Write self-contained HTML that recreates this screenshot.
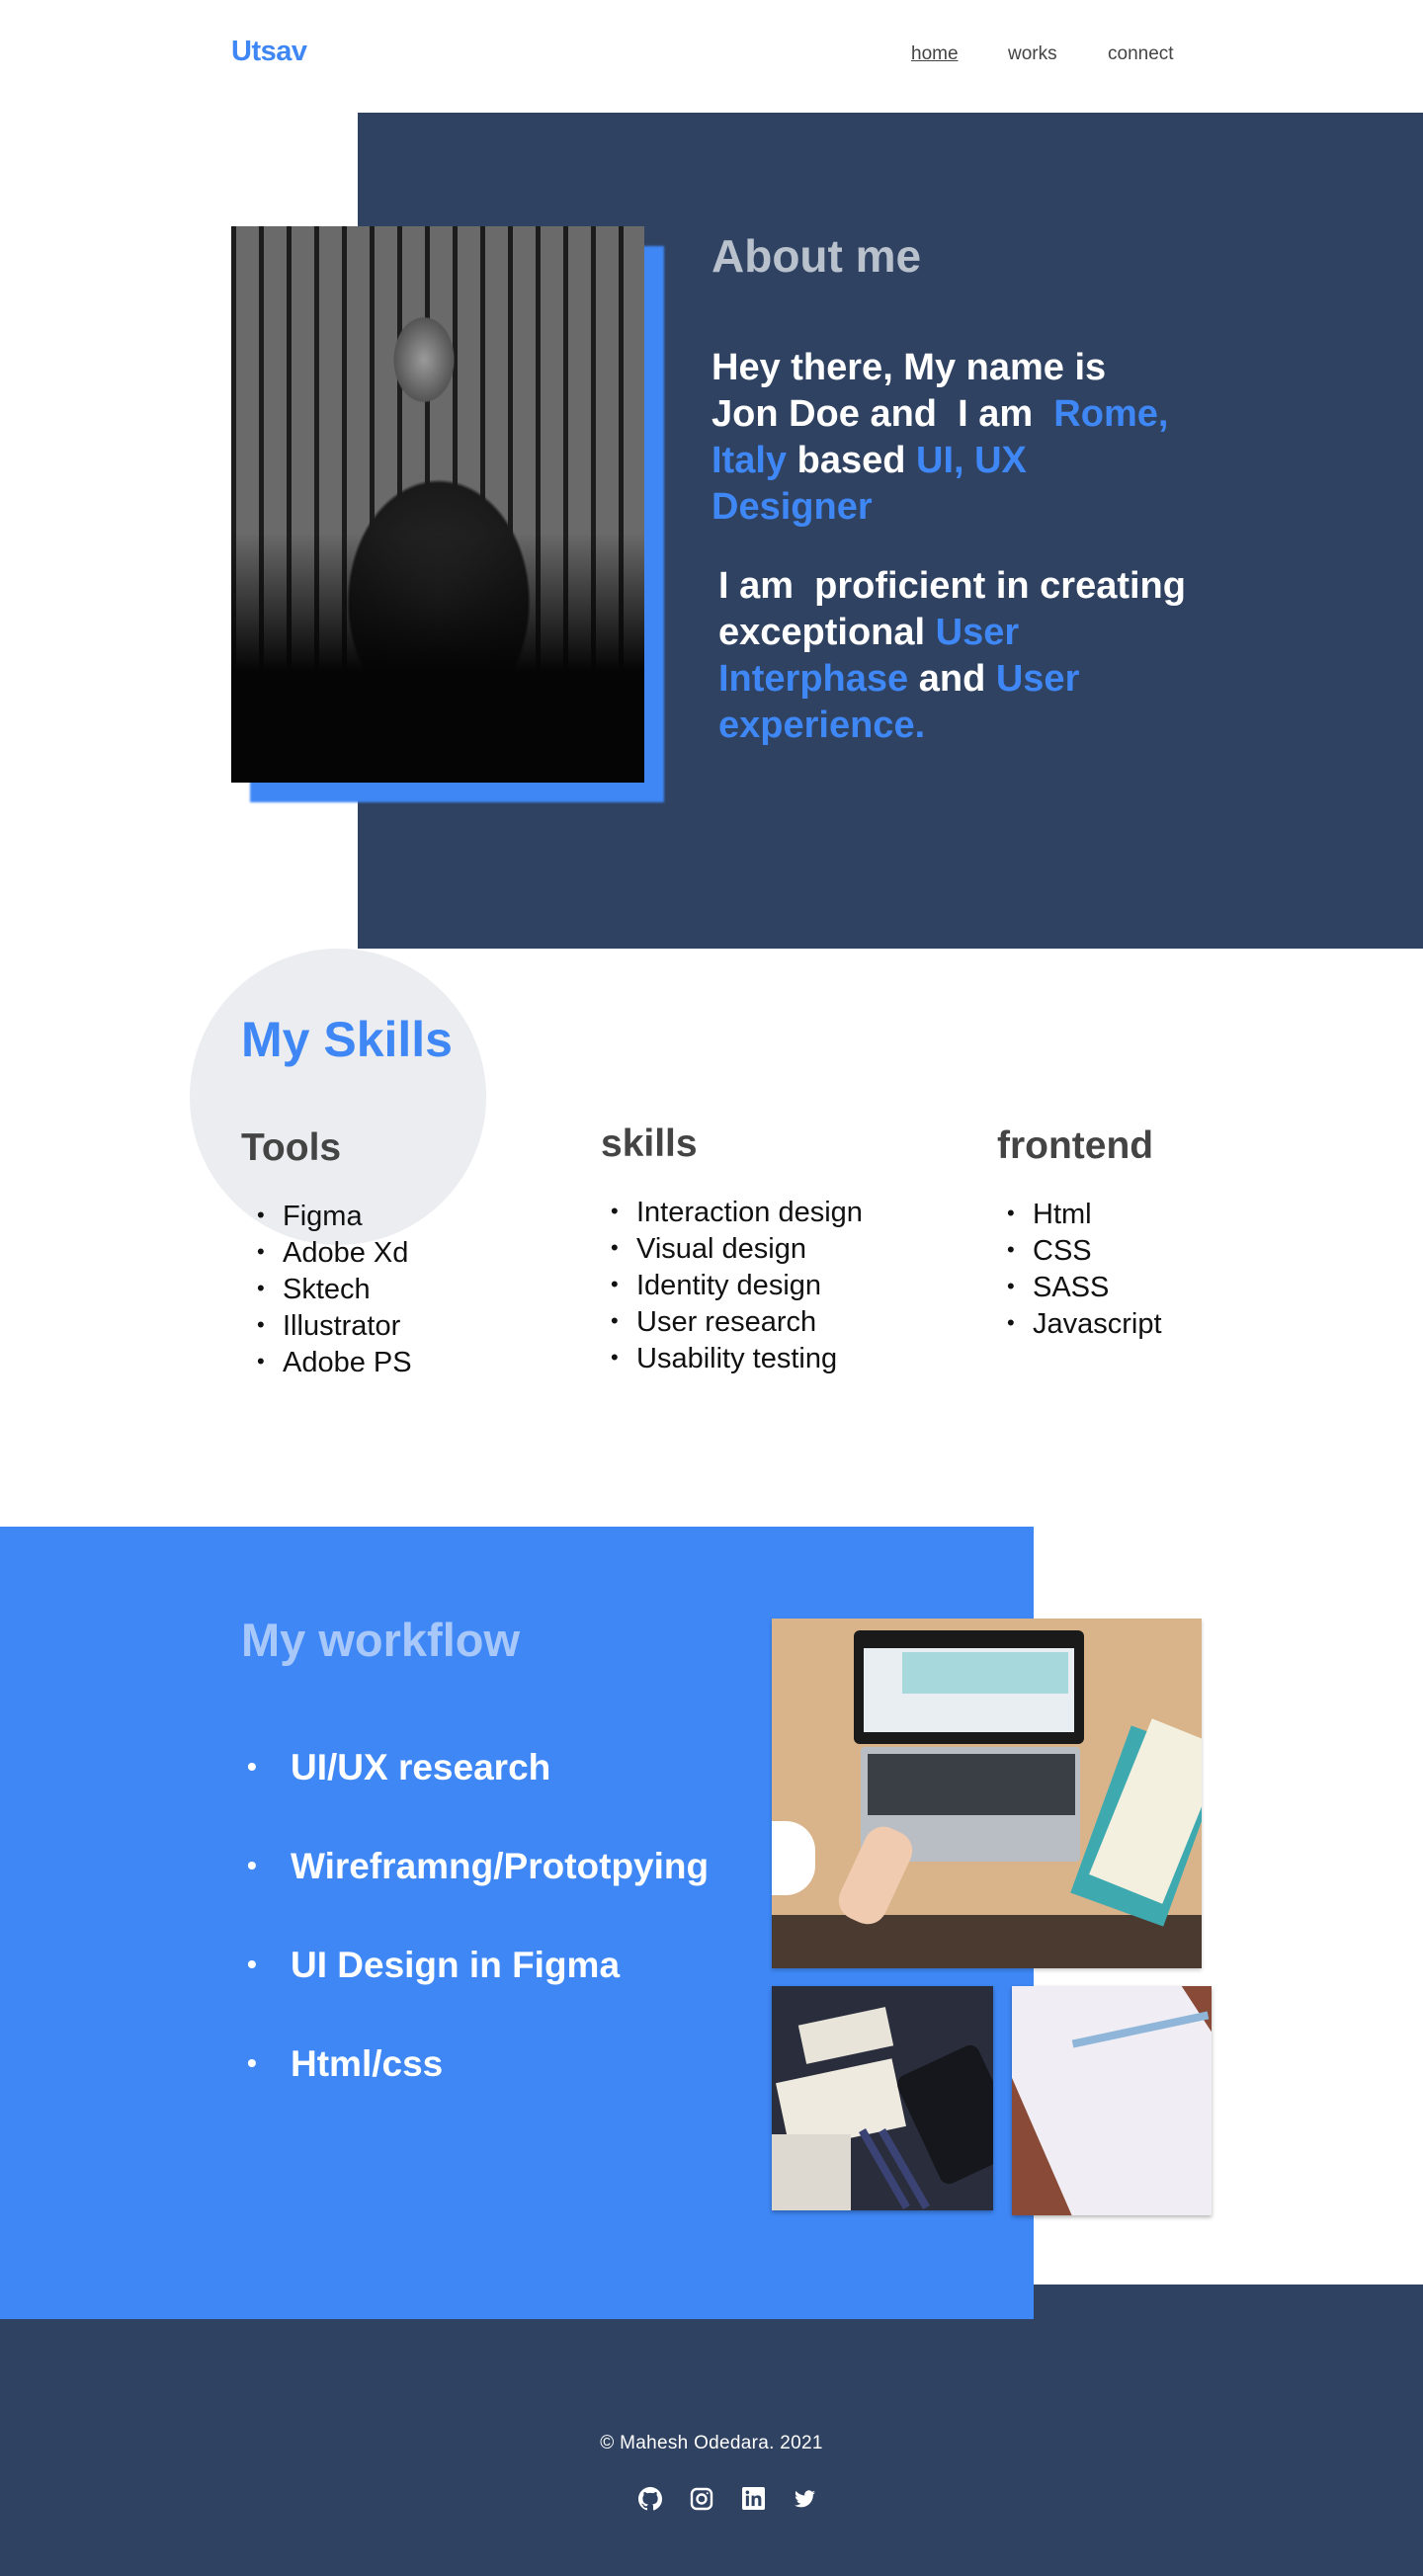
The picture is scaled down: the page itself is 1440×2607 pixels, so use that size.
<!DOCTYPE html>
<html><head><meta charset="utf-8">
<style>
*{margin:0;padding:0;box-sizing:border-box}
html,body{width:1440px;height:2607px;overflow:hidden;background:#fff;font-family:"Liberation Sans",sans-serif}
.abs{position:absolute}
.logo{left:234px;top:36px;font-size:29px;font-weight:bold;color:#3e87f5;letter-spacing:-0.5px}
.nav{top:44px;font-size:19px;color:#444}
.dark{left:362px;top:114px;width:1078px;height:846px;background:#2f4262}
.shadow{left:253px;top:249px;width:419px;height:563px;background:#3e87f5;filter:blur(1px)}
.photo{left:234px;top:229px;width:418px;height:563px;background:
 linear-gradient(180deg,rgba(0,0,0,0) 55%,#050505 80%),
 radial-gradient(ellipse 50px 70px at 195px 135px,#9a9a9a,#555 60%,transparent 62%),
 radial-gradient(ellipse 150px 200px at 210px 380px,#2a2a2a,#1a1a1a 60%,transparent 62%),
 repeating-linear-gradient(90deg,#1c1c1c 0 5px,#6a6a6a 5px 28px),#333;overflow:hidden}
.h-about{left:720px;top:232px;font-size:46px;font-weight:bold;color:#b9c1cd}
.p{color:#fff;font-weight:bold;font-size:38px;line-height:47px;white-space:nowrap}
.b{color:#3e87f5}
.circle{left:192px;top:960px;width:300px;height:300px;border-radius:50%;background:#ecedf1}
.myskills{left:244px;top:1023px;font-size:50px;font-weight:bold;color:#3e87f5}
.col h3{font-size:39px;color:#444;font-weight:bold;margin-bottom:28px}
.col ul{list-style:none;font-size:29px;line-height:35px;color:#111}
.col li:before{content:"•";font-size:22px;display:inline-block;width:26px;margin-left:16px;vertical-align:3px}
.blue{left:0;top:1545px;width:1046px;height:802px;background:#3e87f5}
.foot{left:0;top:2312px;width:1440px;height:295px;background:#2f4262}
.wf{left:244px;top:1632px;font-size:47px;font-weight:bold;color:#a9c8fa}
.wl{left:250px;top:1760px;list-style:none;color:#fff;font-weight:bold;font-size:37px}
.wl li{height:100px;line-height:56px}
.wl li:before{content:"•";font-size:28px;display:inline-block;width:44px;vertical-align:4px}
.img1{left:781px;top:1638px;width:435px;height:354px;background:#d9b48a;overflow:hidden;box-shadow:0 2px 4px rgba(0,0,0,.2)}
.img2{left:781px;top:2010px;width:224px;height:227px;background:#2a2e3c;overflow:hidden;box-shadow:0 2px 4px rgba(0,0,0,.3)}
.img3{left:1024px;top:2010px;width:202px;height:232px;background:#8a4a38;overflow:hidden;box-shadow:0 2px 4px rgba(0,0,0,.3)}
.ft{left:0;width:1440px;top:2462px;text-align:center;color:#fff;font-size:19px;letter-spacing:0.3px}
</style></head><body>
<div class="abs logo">Utsav</div>
<div class="abs nav" style="left:922px;text-decoration:underline">home</div>
<div class="abs nav" style="left:1020px">works</div>
<div class="abs nav" style="left:1121px">connect</div>

<div class="abs dark"></div>
<div class="abs shadow"></div>
<div class="abs photo"></div>
<div class="abs h-about">About me</div>
<div class="abs p" style="left:720px;top:349px">Hey there, My name is<br>Jon Doe and&nbsp; I am&nbsp; <span class="b">Rome,</span><br><span class="b">Italy</span> based <span class="b">UI, UX</span><br><span class="b">Designer</span></div>
<div class="abs p" style="left:727px;top:570px">I am&nbsp; proficient in creating<br>exceptional <span class="b">User</span><br><span class="b">Interphase</span> and <span class="b">User</span><br><span class="b">experience.</span></div>

<div class="abs circle"></div>
<div class="abs myskills">My Skills</div>
<div class="abs col" style="left:244px;top:1140px"><h3>Tools</h3><ul><li>Figma</li><li>Adobe Xd</li><li>Sktech</li><li>Illustrator</li><li>Adobe PS</li></ul></div>
<div class="abs col" style="left:608px;top:1136px"><h3>skills</h3><ul style="margin-top:9px;margin-left:-6px"><li>Interaction design</li><li>Visual design</li><li>Identity design</li><li>User research</li><li>Usability testing</li></ul></div>
<div class="abs col" style="left:1009px;top:1138px"><h3>frontend</h3><ul style="margin-top:9px;margin-left:-6px"><li>Html</li><li>CSS</li><li>SASS</li><li>Javascript</li></ul></div>

<div class="abs foot"></div>
<div class="abs blue"></div>
<div class="abs wf">My workflow</div>
<ul class="abs wl"><li>UI/UX research</li><li>Wireframng/Prototpying</li><li>UI Design in Figma</li><li>Html/css</li></ul>

<div class="abs img1">
 <div class="abs" style="left:0;top:300px;width:435px;height:54px;background:#4a3a30"></div>
 <div class="abs" style="left:83px;top:12px;width:233px;height:115px;background:#1a1a1a;border-radius:6px"></div>
 <div class="abs" style="left:93px;top:30px;width:213px;height:85px;background:#e8eef2"></div>
 <div class="abs" style="left:132px;top:34px;width:168px;height:42px;background:#a7d8dc"></div>
 <div class="abs" style="left:90px;top:130px;width:222px;height:116px;background:#b9bec4;border-radius:4px"></div>
 <div class="abs" style="left:97px;top:137px;width:210px;height:62px;background:#3a3f46"></div>
 <div class="abs" style="left:0;top:205px;width:44px;height:75px;background:#fff;border-radius:0 30px 30px 0"></div>
 <div class="abs" style="left:330px;top:120px;width:100px;height:180px;background:#3eaab0;transform:rotate(20deg)"></div>
 <div class="abs" style="left:350px;top:110px;width:80px;height:170px;background:#f4f0e0;transform:rotate(22deg)"></div>
 <div class="abs" style="left:80px;top:210px;width:50px;height:100px;background:#f0cbb0;border-radius:20px;transform:rotate(25deg)"></div>
</div>
<div class="abs img2">
 <div class="abs" style="left:30px;top:30px;width:90px;height:40px;background:#e8e4da;transform:rotate(-12deg)"></div>
 <div class="abs" style="left:10px;top:85px;width:120px;height:70px;background:#eeeae0;transform:rotate(-12deg)"></div>
 <div class="abs" style="left:0;top:150px;width:80px;height:80px;background:#ddd9d0"></div>
 <div class="abs" style="left:145px;top:70px;width:90px;height:120px;background:#15171c;border-radius:10px;transform:rotate(-25deg)"></div>
 <div class="abs" style="left:110px;top:140px;width:8px;height:90px;background:#3b4375;transform:rotate(-30deg)"></div>
 <div class="abs" style="left:130px;top:140px;width:8px;height:90px;background:#3b4375;transform:rotate(-30deg)"></div>
</div>
<div class="abs img3">
 <div class="abs" style="left:0;top:0;width:202px;height:232px;background:#f0eef4;clip-path:polygon(0 0,85% 0,100% 20%,100% 100%,30% 100%,0 40%)"></div>
 <div class="abs" style="left:60px;top:40px;width:140px;height:8px;background:#8fb6d8;transform:rotate(-12deg)"></div>
</div>

<div class="abs ft">© Mahesh Odedara. 2021</div>
<svg class="abs" style="left:646px;top:2517px" width="24" height="24" viewBox="0 0 16 16" fill="#fff"><path d="M8 0C3.58 0 0 3.58 0 8c0 3.54 2.29 6.53 5.47 7.59.4.07.55-.17.55-.38v-1.33c-2.23.48-2.7-1.07-2.7-1.07-.36-.93-.89-1.17-.89-1.17-.73-.5.05-.49.05-.49.8.06 1.23.83 1.23.83.72 1.23 1.88.87 2.34.67.07-.52.28-.87.51-1.07-1.780-.2-3.64-.89-3.64-3.95 0-.87.31-1.59.82-2.15-.08-.2-.36-1.02.08-2.12 0 0 .67-.21 2.2.82a7.6 7.6 0 0 1 4 0c1.53-1.04 2.2-.82 2.2-.82.44 1.1.16 1.92.08 2.12.51.56.82 1.27.82 2.15 0 3.07-1.87 3.75-3.65 3.95.29.25.54.73.54 1.48v2.2c0 .21.15.46.55.38A8 8 0 0 0 16 8c0-4.42-3.58-8-8-8z"/></svg>
<svg class="abs" style="left:698px;top:2517px" width="24" height="24" viewBox="0 0 24 24" fill="none" stroke="#fff" stroke-width="2.4"><rect x="2" y="2" width="20" height="20" rx="5"/><circle cx="12" cy="12" r="4.5"/><circle cx="17.8" cy="6.2" r="1" fill="#fff" stroke="none"/></svg>
<svg class="abs" style="left:751px;top:2517px" width="23" height="23" viewBox="0 0 24 24"><rect width="24" height="24" rx="2" fill="#fff"/><rect x="4" y="9" width="3.2" height="11" fill="#2f4262"/><circle cx="5.6" cy="5.6" r="1.9" fill="#2f4262"/><path d="M10 9h3v1.6c.6-1 1.8-1.9 3.6-1.9 3 0 3.6 2 3.6 4.6V20H17v-5.7c0-1.3-.1-2.9-1.8-2.9s-2 1.3-2 2.8V20H10z" fill="#2f4262"/></svg>
<svg class="abs" style="left:804px;top:2520px" width="21" height="18" viewBox="0 0 24 20" fill="#fff"><path d="M24 2.4a9.8 9.8 0 0 1-2.8.8A4.9 4.9 0 0 0 23.3.5a9.9 9.9 0 0 1-3.1 1.2A4.9 4.9 0 0 0 11.8 6 14 14 0 0 1 1.7.9a4.9 4.9 0 0 0 1.5 6.6A4.9 4.9 0 0 1 1 6.9v.1a4.9 4.9 0 0 0 3.9 4.8 4.9 4.9 0 0 1-2.2.1 4.9 4.9 0 0 0 4.6 3.4A9.9 9.9 0 0 1 0 17.3 14 14 0 0 0 7.5 19.5c9.1 0 14-7.5 14-14v-.6A10 10 0 0 0 24 2.4z"/></svg>
</body></html>
